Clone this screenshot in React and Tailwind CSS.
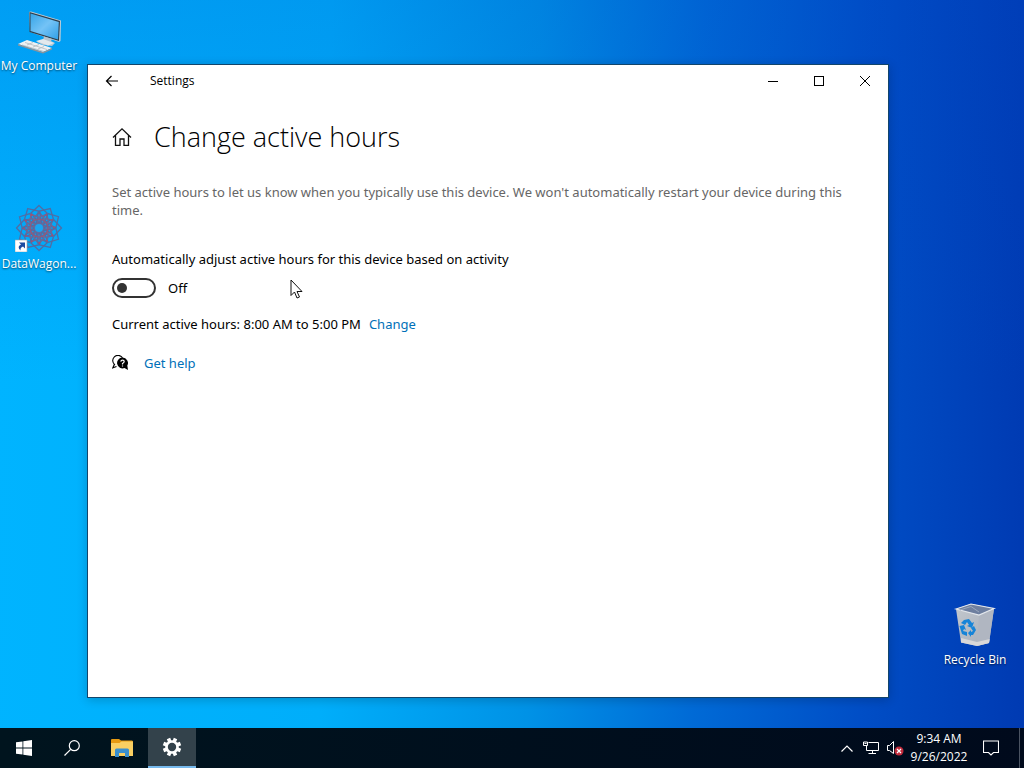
import { useState } from "react";

function DesktopIcon({ label, className, children }) {
  return (
    <button
      type="button"
      className={`absolute flex w-[78px] flex-col items-center gap-1 text-xs leading-4 whitespace-nowrap text-white [text-shadow:0_1px_2px_rgba(0,0,0,0.6)] ${className}`}
    >
      {children}
      <span>{label}</span>
    </button>
  );
}

function ComputerIcon() {
  return (
    <svg width="48" height="48" viewBox="0 0 48 48" aria-hidden="true">
      <defs>
        <linearGradient id="screen" x1="0" y1="0" x2="1" y2="1">
          <stop offset="0" stopColor="#35a4e8" />
          <stop offset="0.5" stopColor="#74c3f6" />
          <stop offset="1" stopColor="#2f9fe8" />
        </linearGradient>
      </defs>
      <path d="M14 6 L16 5.500 L46 14.500 L45.500 35 L44 36 L15 26 Z" fill="#c3ced6" />
      <path d="M14.500 6 L45 15 L44 35 L14.500 26 Z" fill="#2c3e4d" />
      <path d="M15.500 7.500 L43.800 16 L43 33.500 L15.500 25 Z" fill="url(#screen)" />
      <path d="M29 30.500 L37 33 L36 35 L40 37 L37 40 L28 39 L21 35.500 L28 34 Z" fill="#b8c6d0" />
      <path d="M21 35 L28 33 L39 37 L33 39.500 Z" fill="#e3e9ed" />
      <path d="M3 38 L12 34 L37 42 L28 46 Z" fill="#eef1f3" />
      <path d="M3 38 L28 46 L37 42 V43.500 L28 47.500 L3 39.500 Z" fill="#8a949c" />
      <path d="M7 39 L29 45.500 M10 36.500 L32 43.500 M12 39 L18 36.500 M18 41 L24 38.500 M23 43 L29 40.500" stroke="#b2babf" strokeWidth="0.800" fill="none" />
    </svg>
  );
}

function WagonIcon() {
  const angles = [0, 30, 60, 90, 120, 150, 180, 210, 240, 270, 300, 330];
  return (
    <svg width="48" height="48" viewBox="0 0 48 48" aria-hidden="true">
      <g fill="none" stroke="#4f6ea6" strokeWidth="1.300">
        {angles.map((a) => (
          <g key={a} transform={`rotate(${a} 24 24)`}>
            <path d="M24 1.500 L32 9 L24 19 L16 9 Z" />
            <path d="M24 8 L29 14 L24 21 L19 14 Z" stroke="#6b6898" />
            <circle cx="24" cy="9" r="1.200" fill="#a64f70" stroke="none" />
          </g>
        ))}
        <circle cx="24" cy="24" r="9" stroke="#955878" strokeWidth="1.200" />
      </g>
      <circle cx="24" cy="24" r="4" fill="#1aa5f0" />
      <rect x="0" y="36" width="12" height="12" fill="#fff" stroke="#9aa5ad" strokeWidth="0.600" />
      <path d="M4 38.500 H10 V44.500 L8 42.500 Q5 43.500 5.500 46.500 Q1.500 42.500 6 40.500 Z" fill="#1c4aa0" />
    </svg>
  );
}

function BinIcon() {
  return (
    <svg width="48" height="48" viewBox="0 0 48 48" aria-hidden="true">
      <defs>
        <linearGradient id="bin" x1="0" y1="0" x2="1" y2="1">
          <stop offset="0" stopColor="#c3c8ce" />
          <stop offset="1" stopColor="#a6adb9" />
        </linearGradient>
      </defs>
      <path d="M5 9 L20 4 L43 8.500 L38 43 L26 46 L10 42.500 Z" fill="url(#bin)" />
      <path d="M28 15 L43 8.500 L38 43 L26 46 Z" fill="#b0b6c1" />
      <path d="M10 38 L26 42 L38.700 39 L38 43 L26 46 L10 42.500 Z" fill="#d9d8d8" />
      <path d="M5 9 L20 4 L43 8.500 L28 15 Z" fill="#6e7f9f" stroke="#e3e7ec" strokeWidth="1.200" />
      <path d="M9 10 L20 6.500 L28 12" fill="none" stroke="#9ba8bd" />
      <g fill="#1684d8">
        <path d="M13 20 L18 19 L21 23 L23 22 L21 28 L16 26 L18 25 L16 22 L14 25 L10 23 Z" />
        <path d="M8.500 26 L13 25 L15 30 L13 29 L12 31 L16 32 V36 L11 34 Z" />
        <path d="M23 26 L25 30 L22 35 H20 V37 L17 33 L20 30 V32 L22 31 L20 28 Z" />
      </g>
    </svg>
  );
}

function HelpIcon() {
  return (
    <svg width="16" height="16" viewBox="0 0 16 16" aria-hidden="true">
      <path d="M3 10 A5.300 5.300 0 1 1 10.500 2.800" fill="none" stroke="#000" strokeWidth="1.100" />
      <path d="M2.500 9 L0.800 12.800 L4.500 11.600" fill="none" stroke="#000" strokeWidth="1.100" />
      <path d="M10.300 2.600 A5.400 5.400 0 0 1 15.300 10.600 L16 15 L12.500 13 A5.400 5.400 0 1 1 10.300 2.600 Z" fill="#000" />
      <path d="M8.800 6.600 Q9 5.200 10.500 5.200 Q12.200 5.200 12.200 6.600 Q12.200 7.600 10.500 8.500 V9.400 M10.500 10.400 V11.600" fill="none" stroke="#fff" strokeWidth="1.200" />
    </svg>
  );
}

function SettingsWindow() {
  const [auto, setAuto] = useState(false);
  return (
    <main className="absolute top-16 right-[135px] bottom-[30px] left-[87px] overflow-hidden border border-[#12456b] bg-white text-black shadow-[0_2px_10px_rgba(0,0,0,0.2)]">
      <header className="flex h-8 items-center">
        <button type="button" aria-label="Back" className="flex h-8 w-12 items-center justify-center">
          <svg width="14" height="12" viewBox="0 0 14 12" fill="none" stroke="#000" strokeWidth="1.200" aria-hidden="true">
            <path d="M13 6 H1.500 M6.500 1 L1.500 6 L6.500 11" />
          </svg>
        </button>
        <span className="ml-3.5 flex-1 text-xs">Settings</span>
        <button type="button" aria-label="Minimize" className="flex h-8 w-[46px] items-center justify-center">
          <svg width="10" height="10" viewBox="0 0 10 10" stroke="#000" aria-hidden="true"><path d="M0 5.500 H10" /></svg>
        </button>
        <button type="button" aria-label="Maximize" className="flex h-8 w-[46px] items-center justify-center">
          <svg width="10" height="10" viewBox="0 0 10 10" fill="none" stroke="#000" aria-hidden="true"><rect x="0.500" y="0.500" width="9" height="9" /></svg>
        </button>
        <button type="button" aria-label="Close" className="flex h-8 w-[46px] items-center justify-center">
          <svg width="10" height="10" viewBox="0 0 10 10" stroke="#000" aria-hidden="true"><path d="M0 0 L10 10 M10 0 L0 10" /></svg>
        </button>
      </header>
      <div className="px-6 pt-5 font-['Noto_Sans','Open_Sans',sans-serif] text-[13px]">
        <div className="flex items-center gap-[22px]">
          <button type="button" aria-label="Home">
            <svg width="20" height="20" viewBox="0 0 20 20" fill="none" stroke="#111" strokeWidth="1.300" aria-hidden="true">
              <path d="M1 10.500 L10 1.800 L19 10.500 M3.500 8.500 V18.300 H8 V12 H12 V18.300 H16.500 V8.500" />
            </svg>
          </button>
          <h1 className="font-['Open_Sans','Noto_Sans',sans-serif] text-[27px] leading-10 font-light">Change active hours</h1>
        </div>
        <p className="mt-[26px] leading-[18px] text-[#666]">
          Set active hours to let us know when you typically use this device. We won't automatically restart your device during this time.
        </p>
        <label htmlFor="auto-hours" className="mt-[30px] block leading-5">
          Automatically adjust active hours for this device based on activity
        </label>
        <div className="mt-[9px] flex items-center gap-3">
          <input
            id="auto-hours"
            type="checkbox"
            role="switch"
            checked={auto}
            onChange={(e) => setAuto(e.target.checked)}
            className="flex h-5 w-11 appearance-none items-center rounded-full border-2 border-[#333] px-[3px] before:size-2.5 before:rounded-full before:bg-[#333] checked:justify-end checked:border-[#0067b8] checked:bg-[#0067b8] checked:before:bg-white"
          />
          <span className="leading-5">{auto ? "On" : "Off"}</span>
        </div>
        <p className="mt-4 flex gap-2 leading-5">
          <span>Current active hours: 8:00 AM to 5:00 PM</span>
          <a href="#change" className="text-[#0070b8]">Change</a>
        </p>
        <div className="mt-[19px] flex items-center gap-4">
          <HelpIcon />
          <a href="#help" className="leading-5 text-[#0070b8]">Get help</a>
        </div>
      </div>
    </main>
  );
}

function Taskbar() {
  return (
    <footer className="flex h-10 items-stretch bg-linear-to-r from-[#00141e] to-[#000a1c] text-white">
      <button type="button" aria-label="Start" className="flex w-12 items-center justify-center">
        <svg width="16" height="16" viewBox="0 0 16 16" fill="#fff" aria-hidden="true">
          <path d="M0 2.300 L6.500 1.400 V7.600 H0 Z M7.300 1.300 L16 0 V7.600 H7.300 Z M0 8.400 H6.500 V14.600 L0 13.700 Z M7.300 8.400 H16 V16 L7.300 14.700 Z" />
        </svg>
      </button>
      <button type="button" aria-label="Search" className="flex w-12 items-center justify-center">
        <svg width="16" height="16" viewBox="0 0 16 16" fill="none" stroke="#fff" strokeWidth="1.200" aria-hidden="true">
          <circle cx="10.300" cy="5.700" r="5" /><path d="M6.700 9.300 L0.500 15.500" />
        </svg>
      </button>
      <button type="button" aria-label="File Explorer" className="flex w-[52px] items-center justify-center">
        <svg width="22" height="18" viewBox="0 0 22 18" aria-hidden="true">
          <path d="M0 1 Q0 0 1 0 H8 L10 1.500 H21 Q22 1.500 22 3 V7 H0 Z" fill="#e69a12" />
          <path d="M0 4 H8.500 L10.500 2.500 H22 V17 H0 Z" fill="#f9cf62" />
          <path d="M4 11 Q4 9.500 5.500 9.500 H16.500 Q18 9.500 18 11 V18 H14 V14 H8 V18 H4 Z" fill="#3a8fcd" />
        </svg>
      </button>
      <button type="button" aria-label="Settings" className="flex w-12 items-center justify-center border-b-2 border-[#76b9ed] bg-[#33424b]">
        <svg width="20" height="20" viewBox="0 0 20 20" aria-hidden="true">
          <g fill="#fff">
            {[22.5, 67.5, 112.5, 157.5].map((a) => (
              <rect key={a} x="8.200" y="0.800" width="3.600" height="18.400" transform={`rotate(${a} 10 10)`} />
            ))}
            <circle cx="10" cy="10" r="6.800" />
          </g>
          <circle cx="10" cy="10" r="4.200" fill="#33424b" />
        </svg>
      </button>
      <div className="ml-auto flex items-center">
        <button type="button" aria-label="Show hidden icons" className="flex w-6 justify-center">
          <svg width="12" height="7" viewBox="0 0 12 7" fill="none" stroke="#fff" strokeWidth="1.200" aria-hidden="true"><path d="M0.500 6.500 L6 1 L11.500 6.500" /></svg>
        </button>
        <button type="button" aria-label="Network" className="flex w-6 justify-center">
          <svg width="16" height="14" viewBox="0 0 16 14" fill="none" stroke="#fff" aria-hidden="true">
            <path d="M5.500 1.500 H15.500 V9.500 H3.500 V5 M9.500 9.500 V12.500 M5.500 12.500 H13" /><path d="M0.500 1 V4.500 H4.500 V1 Z M1.500 2.500 H3.500" />
          </svg>
        </button>
        <button type="button" aria-label="Volume" className="flex w-6 justify-center">
          <svg width="18" height="16" viewBox="0 0 18 16" aria-hidden="true">
            <path d="M1.500 5.500 H3.500 L7.500 1.500 V13.500 L3.500 10.500 H1.500 Z" fill="none" stroke="#fff" />
            <circle cx="13" cy="11" r="4.500" fill="#c22b3c" /><path d="M11 9 L15 13 M15 9 L11 13" stroke="#fff" strokeWidth="1.200" />
          </svg>
        </button>
        <div className="w-16 text-center text-xs leading-[18px]">
          <div>9:34 AM</div>
          <div>9/26/2022</div>
        </div>
        <button type="button" aria-label="Notifications" className="flex w-10 justify-center">
          <svg width="16" height="16" viewBox="0 0 16 16" fill="none" stroke="#fff" strokeWidth="1.100" aria-hidden="true"><path d="M0.500 1 H15.500 V12.500 H10.500 L8 15 L5.500 12.500 H0.500 Z" /></svg>
        </button>
        <div className="ml-2 h-10 w-[5px] border-l border-[#4a5362]" />
      </div>
    </footer>
  );
}

export default function App() {
  return (
    <div className="flex min-h-screen flex-col bg-[linear-gradient(180deg,rgba(0,70,200,0.2)_0%,rgba(0,70,200,0)_50%),linear-gradient(91deg,#00b4ff_0%,#00aefa_32%,#0092e6_52%,#006ad6_68%,#004ec6_84%,#003ab2_100%)] font-['Open_Sans','Noto_Sans',sans-serif]">
      <div className="relative min-h-[560px] flex-1">
        <DesktopIcon label="My Computer" className="top-1.5 left-0"><ComputerIcon /></DesktopIcon>
        <DesktopIcon label="DataWagon..." className="top-[204px] left-0"><WagonIcon /></DesktopIcon>
        <DesktopIcon label="Recycle Bin" className="right-2.5 bottom-[60px]"><BinIcon /></DesktopIcon>
        <SettingsWindow />
        <svg className="pointer-events-none absolute top-[279px] left-[290px]" width="14" height="21" viewBox="0 0 14 21" aria-hidden="true">
          <path d="M1 1 V16.500 L4.500 13 L7 19 L9.500 18 L7 12.500 H12 Z" fill="#fff" stroke="#111" />
        </svg>
      </div>
      <Taskbar />
    </div>
  );
}
